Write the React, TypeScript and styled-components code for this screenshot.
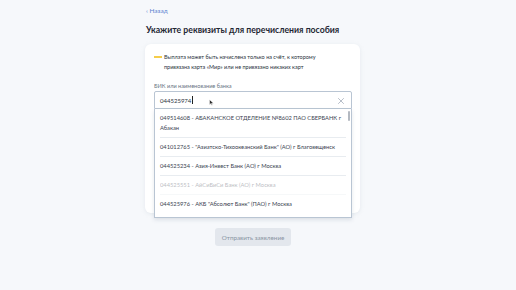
import React from "react";
import styled, { createGlobalStyle } from "styled-components";

const GlobalStyle = createGlobalStyle`
  html, body {
    margin: 0;
    padding: 0;
    background: #f6f8fb;
    font-family: Lato, "Noto Sans", sans-serif;
  }
`;

const banks = [
  { bik: "049514608", name: "АБАКАНСКОЕ ОТДЕЛЕНИЕ №8602 ПАО СБЕРБАНК г Абакан" },
  { bik: "041012765", name: "\"Азиатско-Тихоокеанский Банк\" (АО) г Благовещенск" },
  { bik: "044525234", name: "Азия-Инвест Банк (АО) г Москва" },
  { bik: "044525551", name: "АйСиБиСи Банк (АО) г Москва", faded: true },
  { bik: "044525976", name: "АКБ \"Абсолют Банк\" (ПАО) г Москва" },
];

const App: React.FC = () => {
  return (
    <Page>
      <GlobalStyle />
      <Column>
        <BackLink>‹ Назад</BackLink>
        <Title>Укажите реквизиты для перечисления пособия</Title>
        <Card>
          <Notice>
            <NoticeMark />
            <NoticeText>
              Выплата может быть начислена только на счёт, к которому
              привязана карта «Мир» или не привязано никаких карт
            </NoticeText>
          </Notice>
          <Label>БИК или наименование банка</Label>
          <Field>
            <InputBox>
              <InputText>044525974</InputText>
              <Caret />
              <Cursor viewBox="0 0 8 11">
                <path d="M1 1 L1 9 L3 7 L4.5 10 L5.5 9.5 L4 6.5 L7 6.5 Z" fill="#222" stroke="#fff" strokeWidth="0.7" />
              </Cursor>
              <ClearIcon viewBox="0 0 10 10">
                <path d="M1.5 1.5 L8.5 8.5 M8.5 1.5 L1.5 8.5" stroke="#9aa5b3" strokeWidth="0.9" />
              </ClearIcon>
            </InputBox>
            <Dropdown>
              <ScrollThumb />
              {banks.map((b) => (
                <Option key={b.bik} $faded={!!b.faded}>
                  {b.bik} - {b.name}
                </Option>
              ))}
            </Dropdown>
          </Field>
        </Card>
        <SubmitButton>Отправить заявление</SubmitButton>
      </Column>
    </Page>
  );
};

const Page = styled.div`
  width: 516px;
  height: 290px;
  overflow: hidden;
  padding-left: 145px;
  box-sizing: border-box;
`;

const Column = styled.div`
  width: 215px;
  display: flex;
  flex-direction: column;
`;

const BackLink = styled.div`
  margin-top: 7px;
  margin-left: 1px;
  font-size: 6.5px;
  line-height: 8px;
  color: #5a82d0;
`;

const Title = styled.h1`
  margin: 8px 0 0 1px;
  font-size: 8.7px;
  line-height: 13px;
  font-weight: 700;
  color: #1f2733;
  white-space: nowrap;
`;

const Card = styled.div`
  margin-top: 8px;
  height: 169px;
  background: #ffffff;
  border-radius: 6px;
  box-shadow: 0 1px 4px rgba(180, 190, 205, 0.25);
  padding: 8px 8px 0 9px;
  box-sizing: border-box;
`;

const Notice = styled.div`
  display: flex;
  align-items: flex-start;
  gap: 2px;
`;

const NoticeMark = styled.div`
  width: 8px;
  height: 2px;
  margin-top: 4px;
  background: #f5cd4a;
  flex-shrink: 0;
`;

const NoticeText = styled.div`
  font-size: 5.5px;
  line-height: 10px;
  color: #2b3440;
  width: 168px;
`;

const Label = styled.div`
  margin-top: 9.5px;
  font-size: 5.6px;
  line-height: 7px;
  color: #66727f;
`;

const Field = styled.div`
  position: relative;
  margin-top: 2.5px;
  width: 198px;
`;

const InputBox = styled.div`
  position: relative;
  height: 18px;
  border: 1px solid #b9c5d3;
  border-radius: 2px 2px 0 0;
  box-sizing: border-box;
  display: flex;
  align-items: center;
  padding-left: 5px;
  background: #fff;
`;

const InputText = styled.span`
  font-size: 6px;
  color: #2b3440;
`;

const Caret = styled.span`
  width: 0.6px;
  height: 8px;
  background: #222;
  margin-left: 0.5px;
`;

const Cursor = styled.svg`
  position: absolute;
  left: 54px;
  top: 7px;
  width: 5px;
  height: 7px;
`;

const ClearIcon = styled.svg`
  position: absolute;
  right: 6px;
  top: 4.5px;
  width: 8px;
  height: 8px;
`;

const Dropdown = styled.div`
  position: absolute;
  left: 0;
  top: 18px;
  width: 198px;
  height: 109px;
  background: #fff;
  border: 1px solid #b9c5d3;
  border-top: none;
  box-sizing: border-box;
  box-shadow: 0 2px 4px rgba(120, 135, 155, 0.2);
  padding: 0 5px 0 5px;
  overflow: hidden;
`;

const ScrollThumb = styled.div`
  position: absolute;
  right: 1px;
  top: 2px;
  width: 2px;
  height: 10px;
  background: #b3b9c1;
  border-radius: 1px;
`;

const Option = styled.div<{ $faded: boolean }>`
  padding: 4px 0;
  border-bottom: 1px solid #e8ecf0;
  font-size: 5.75px;
  line-height: 10px;
  color: #3a4350;
  opacity: ${(p) => (p.$faded ? 0.35 : 1)};
  &:last-child {
    border-bottom: none;
  }
`;

const SubmitButton = styled.div`
  align-self: center;
  margin-top: 15px;
  margin-left: 1px;
  width: 76px;
  height: 18px;
  border-radius: 3px;
  background: #e3e7ed;
  color: #8a95a3;
  font-size: 6.3px;
  display: flex;
  align-items: center;
  justify-content: center;
`;

export default App;
